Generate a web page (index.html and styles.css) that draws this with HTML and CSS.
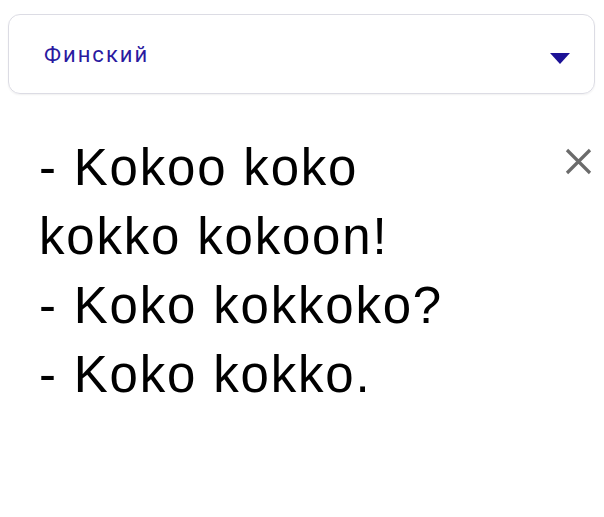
FILE: index.html
```html
<!DOCTYPE html>
<html lang="ru">
<head>
<meta charset="utf-8">
<link rel="stylesheet" href="styles.css">
</head>
<body>
<div class="page">
  <div class="select">
    <span class="select-label">Финский</span>
    <svg class="select-arrow" width="20" height="11" viewBox="0 0 20 11"><path d="M0 0 H20 L10 11 Z" fill="#1c1296"/></svg>
  </div>
  <div class="result">
    <div class="result-text">- Kokoo koko kokko kokoon!
- Koko kokkoko?
- Koko kokko.</div>
    <button class="close" aria-label="Закрыть">
      <svg width="27" height="27" viewBox="0 0 27 27"><path d="M2 2 L25 25 M25 2 L2 25" stroke="#6b6b6b" stroke-width="3.2" fill="none"/></svg>
    </button>
  </div>
</div>
</body>
</html>
```
FILE: styles.css
```css
html, body {
  margin: 0;
  padding: 0;
  background: #fff;
}
.page {
  padding: 14px 9px 0 8px;
}
.select {
  height: 78px;
  border: 1px solid #dcdce4;
  border-radius: 12px;
  box-shadow: 0 1px 2px rgba(0,0,0,0.06);
  display: flex;
  align-items: center;
  justify-content: space-between;
  padding: 0 24px 0 35px;
}
.select-label {
  font-family: Roboto, "Noto Sans", sans-serif;
  font-size: 22px;
  letter-spacing: 2px;
  color: #2a1aa0;
}
.select-arrow {
  display: block;
  margin-top: 8px;
}
.result {
  display: flex;
  justify-content: space-between;
  align-items: flex-start;
  padding: 39px 0 0 31px;
}
.result-text {
  font-family: "Liberation Sans", Arial, sans-serif;
  font-size: 51px;
  letter-spacing: 1.8px;
  line-height: 69px;
  color: #000;
  white-space: pre-line;
  width: 430px;
}
.close {
  border: 0;
  background: none;
  padding: 0;
  margin: 15px 3px 0 0;
  width: 27px;
  height: 27px;
  display: block;
}
.close svg {
  display: block;
}
```
